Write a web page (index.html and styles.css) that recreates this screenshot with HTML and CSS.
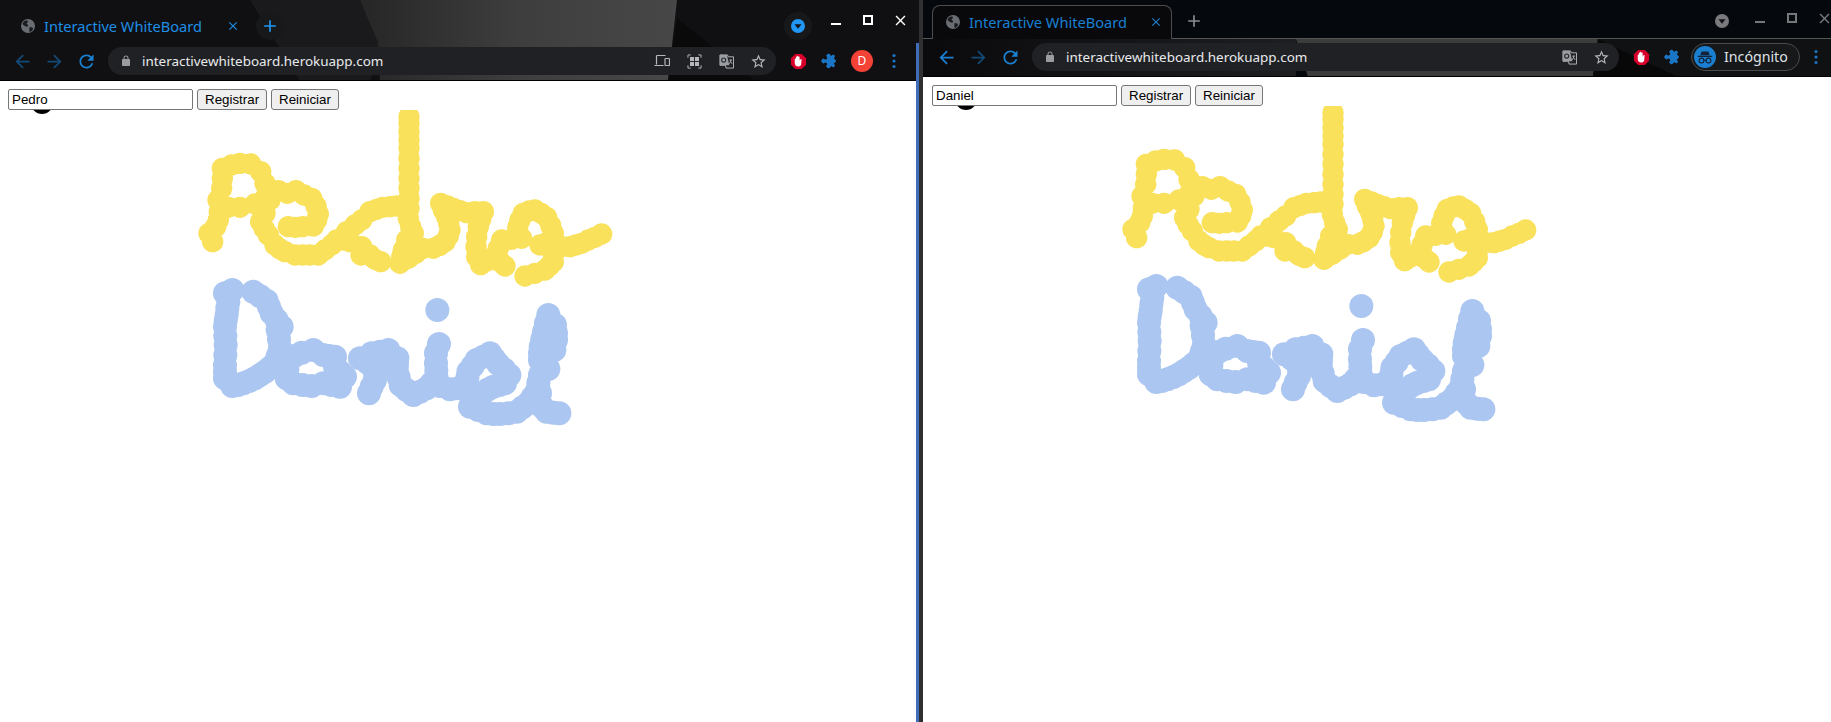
FILE: index.html
```html
<!DOCTYPE html>
<html lang="es">
<head>
<meta charset="utf-8">
<title>Interactive WhiteBoard</title>
<link rel="stylesheet" href="styles.css">
</head>
<body>
<svg class="defs" aria-hidden="true">
  <defs>
    <symbol id="i-globe" viewBox="0 0 16 16"><circle cx="8" cy="8" r="7" fill="#6a6d72"/><path d="M4 3.200l3.200-.9.8 1.800-1.600 1.300 1.800 1.800-.8 1.600-2.200-.6L2.400 6zM9.500 9l3 .6.6 1.600-2.600 2.700-1.200-.6z" fill="#1a1b1e"/></symbol>
    <symbol id="i-close" viewBox="0 0 24 24"><path d="M19 6.410L17.590 5 12 10.590 6.410 5 5 6.410 10.590 12 5 17.590 6.410 19 12 13.410 17.590 19 19 17.590 13.410 12z"/></symbol>
    <symbol id="i-plus" viewBox="0 0 24 24"><path d="M19 13h-6v6h-2v-6H5v-2h6V5h2v6h6z"/></symbol>
    <symbol id="i-back" viewBox="0 0 24 24"><path d="M20 11H7.830l5.590-5.590L12 4l-8 8 8 8 1.410-1.410L7.830 13H20v-2z"/></symbol>
    <symbol id="i-fwd" viewBox="0 0 24 24"><path d="M12 4l-1.410 1.410L16.170 11H4v2h12.170l-5.580 5.590L12 20l8-8z"/></symbol>
    <symbol id="i-reload" viewBox="0 0 24 24"><path d="M17.650 6.350C16.200 4.900 14.210 4 12 4c-4.420 0-7.990 3.580-7.990 8s3.570 8 7.990 8c3.730 0 6.840-2.550 7.730-6h-2.080c-.82 2.330-3.040 4-5.650 4-3.310 0-6-2.690-6-6s2.690-6 6-6c1.660 0 3.140.69 4.220 1.780L13 11h7V4l-2.350 2.350z"/></symbol>
    <symbol id="i-lock" viewBox="0 0 24 24"><path d="M18 8h-1V6c0-2.760-2.240-5-5-5S7 3.240 7 6v2H6c-1.100 0-2 .9-2 2v10c0 1.100.9 2 2 2h12c1.100 0 2-.9 2-2V10c0-1.100-.9-2-2-2zM9 6c0-1.660 1.340-3 3-3s3 1.340 3 3v2H9V6z"/></symbol>
    <symbol id="i-star" viewBox="0 0 24 24"><path d="M22 9.240l-7.190-.62L12 2 9.190 8.630 2 9.240l5.460 4.730L5.820 21 12 17.270 18.180 21l-1.630-7.030L22 9.240zM12 15.400l-3.760 2.270 1-4.280-3.320-2.880 4.380-.38L12 6.100l1.710 4.040 4.380.38-3.320 2.880 1 4.280L12 15.400z"/></symbol>
    <symbol id="i-puzzle" viewBox="0 0 24 24"><g transform="rotate(45 12 12) translate(1.500 1.500) scale(.875)"><path d="M20.500 11H19V7c0-1.100-.9-2-2-2h-4V3.500C13 2.120 11.880 1 10.500 1S8 2.120 8 3.500V5H4c-1.100 0-1.990.9-1.990 2v3.800H3.500c1.490 0 2.700 1.210 2.700 2.700s-1.210 2.700-2.700 2.700H2V20c0 1.100.9 2 2 2h3.800v-1.500c0-1.490 1.210-2.700 2.700-2.700 1.490 0 2.700 1.210 2.700 2.700V22H17c1.100 0 2-.9 2-2v-4h1.500c1.380 0 2.500-1.120 2.500-2.500S21.880 11 20.500 11z"/></g></symbol>
    <symbol id="i-ublock" viewBox="0 0 18 18"><path d="M5.500 1h7L17 5.500v7L12.500 17h-7L1 12.500v-7z" fill="#d8002a"/><path d="M5 10V6.500c0-.9 1.200-.9 1.200 0V4.500c0-.9 1.300-.9 1.300 0V3.500c0-.9 1.400-.9 1.400 0v1c0-.9 1.300-.9 1.300 0v3.600l.8-1.300c.6-.8 1.600-.2 1.200.6L11.800 12.500c-.6 1.100-1.500 1.900-3 1.900C6.300 14.400 5 12.500 5 10z" fill="#fff"/></symbol>
    <symbol id="i-menu" viewBox="0 0 16 16"><circle cx="8" cy="2.500" r="1.600"/><circle cx="8" cy="8" r="1.600"/><circle cx="8" cy="13.500" r="1.600"/></symbol>
    <symbol id="i-drop" viewBox="0 0 14 14"><circle cx="7" cy="7" r="7"/><path d="M3.500 5.200h7L7 9.800z" fill="#10131a"/></symbol>
    <symbol id="i-translate" viewBox="0 0 16 16"><path d="M1 1h8l1 2h5.500v12H7.500L7 12H1z" fill="none" stroke="#b8babd" stroke-width="1"/><path d="M1 1h7.500l2.500 11H1z" fill="#9a9da1"/><circle cx="5" cy="6.500" r="2.200" fill="none" stroke="#2a2b2e" stroke-width="1.200"/><path d="M11 6.500h3M12.500 6v1.500l-1.500 3M12.500 8l1.500 2.500" fill="none" stroke="#b8babd" stroke-width=".9"/></symbol>
    <symbol id="i-cast" viewBox="0 0 16 14"><path d="M2.500 1.500h9M2.500 1.500v9M.5 11.500h9" fill="none" stroke="#b5b7ba" stroke-width="1.200"/><rect x="11" y="4.500" width="4.500" height="7" rx=".7" fill="none" stroke="#b5b7ba" stroke-width="1.200"/></symbol>
    <symbol id="i-qr" viewBox="0 0 16 16"><path d="M1 4V1h3M12 1h3v3M15 12v3h-3M4 15H1v-3" fill="none" stroke="#b5b7ba" stroke-width="1"/><rect x="3.200" y="3.200" width="4.300" height="4.300" fill="#b5b7ba"/><rect x="8.500" y="3.200" width="4.300" height="4.300" fill="#b5b7ba"/><rect x="3.200" y="8.500" width="4.300" height="4.300" fill="#b5b7ba"/><rect x="8.500" y="8.500" width="4.300" height="4.300" fill="#b5b7ba"/></symbol>
    <symbol id="i-spy" viewBox="0 0 22 22"><circle cx="11" cy="11" r="11" fill="#1a7fd0"/><path d="M7.500 5.500h7l1.200 3.700H6.300zM3.800 9.800h14.400v1.200H3.800z" fill="#12233a"/><circle cx="7.500" cy="14.500" r="2.400" fill="none" stroke="#12233a" stroke-width="1.100"/><circle cx="14.500" cy="14.500" r="2.400" fill="none" stroke="#12233a" stroke-width="1.100"/><path d="M9.900 14.300h2.200" stroke="#12233a" stroke-width="1.100"/></symbol>
    <g id="ink">
      <circle class="pen" cx="42" cy="-7" r="11"/>
      <g class="ink-yellow" transform="translate(190 -10) scale(.33333)">
        <circle cx="657" cy="50"/><circle cx="657" cy="70"/><circle cx="657" cy="95"/><circle cx="657" cy="120"/><circle cx="657" cy="145"/><circle cx="657" cy="175"/><circle cx="657" cy="205"/><circle cx="657" cy="235"/><circle cx="657" cy="265"/><circle cx="657" cy="295"/><circle cx="657" cy="325"/><circle cx="655" cy="355"/><circle cx="662" cy="380"/><circle cx="670" cy="400"/><circle cx="650" cy="420"/><circle cx="640" cy="450"/><circle cx="635" cy="470"/>
        <circle cx="68" cy="425"/><circle cx="57" cy="400"/><circle cx="77" cy="380"/><circle cx="85" cy="360"/><circle cx="88" cy="335"/><circle cx="84" cy="300"/><circle cx="95" cy="265"/><circle cx="97" cy="235"/><circle cx="97" cy="205"/><circle cx="125" cy="195"/><circle cx="150" cy="190"/><circle cx="182" cy="192"/><circle cx="212" cy="215"/><circle cx="225" cy="250"/><circle cx="228" cy="290"/><circle cx="195" cy="312"/><circle cx="150" cy="322"/><circle cx="115" cy="322"/>
        <circle cx="240" cy="300"/><circle cx="265" cy="272"/><circle cx="292" cy="280"/><circle cx="318" cy="272"/><circle cx="342" cy="285"/><circle cx="365" cy="295"/><circle cx="378" cy="318"/><circle cx="385" cy="342"/><circle cx="380" cy="360"/><circle cx="370" cy="378"/><circle cx="338" cy="380"/><circle cx="316" cy="382"/><circle cx="295" cy="380"/>
        <circle cx="225" cy="340"/><circle cx="212" cy="365"/><circle cx="222" cy="385"/><circle cx="235" cy="405"/><circle cx="255" cy="435"/><circle cx="270" cy="447"/><circle cx="285" cy="455"/><circle cx="315" cy="465"/><circle cx="338" cy="465"/><circle cx="360" cy="465"/><circle cx="385" cy="465"/><circle cx="405" cy="450"/><circle cx="425" cy="435"/><circle cx="440" cy="420"/><circle cx="470" cy="395"/><circle cx="495" cy="375"/><circle cx="515" cy="360"/><circle cx="540" cy="335"/><circle cx="560" cy="328"/><circle cx="578" cy="322"/><circle cx="600" cy="320"/><circle cx="620" cy="318"/>
        <circle cx="460" cy="420"/><circle cx="480" cy="425"/><circle cx="515" cy="440"/><circle cx="513" cy="465"/><circle cx="540" cy="465"/><circle cx="555" cy="478"/><circle cx="572" cy="485"/><circle cx="630" cy="490"/><circle cx="655" cy="475"/><circle cx="678" cy="460"/><circle cx="700" cy="445"/><circle cx="730" cy="445"/><circle cx="748" cy="437"/><circle cx="765" cy="425"/><circle cx="775" cy="408"/><circle cx="780" cy="390"/><circle cx="776" cy="370"/><circle cx="770" cy="350"/><circle cx="760" cy="330"/><circle cx="752" cy="310"/><circle cx="772" cy="318"/><circle cx="790" cy="325"/><circle cx="810" cy="332"/><circle cx="830" cy="338"/><circle cx="855" cy="335"/><circle cx="880" cy="335"/><circle cx="872" cy="358"/><circle cx="865" cy="380"/><circle cx="860" cy="410"/><circle cx="858" cy="440"/><circle cx="860" cy="470"/><circle cx="872" cy="494"/><circle cx="892" cy="482"/><circle cx="912" cy="470"/><circle cx="930" cy="485"/><circle cx="945" cy="498"/><circle cx="925" cy="445"/><circle cx="935" cy="420"/><circle cx="965" cy="418"/><circle cx="995" cy="415"/><circle cx="983" cy="382"/><circle cx="990" cy="360"/><circle cx="1000" cy="340"/><circle cx="1018" cy="333"/><circle cx="1035" cy="330"/><circle cx="1053" cy="340"/><circle cx="1070" cy="352"/><circle cx="1082" cy="376"/><circle cx="1090" cy="400"/><circle cx="1090" cy="420"/><circle cx="1090" cy="440"/><circle cx="1090" cy="462"/><circle cx="1090" cy="485"/><circle cx="1078" cy="498"/><circle cx="1065" cy="510"/><circle cx="1035" cy="520"/><circle cx="1005" cy="528"/>
        <circle cx="1050" cy="435"/><circle cx="1070" cy="428"/><circle cx="1115" cy="440"/><circle cx="1140" cy="440"/><circle cx="1158" cy="435"/><circle cx="1175" cy="430"/><circle cx="1195" cy="420"/><circle cx="1215" cy="412"/><circle cx="1235" cy="402"/>
      </g>
      <g class="ink-blue" transform="translate(200 160) scale(.33333)">
        <circle cx="97" cy="60"/><circle cx="75" cy="70"/><circle cx="85" cy="95"/><circle cx="82" cy="115"/><circle cx="80" cy="135"/><circle cx="77" cy="152"/><circle cx="75" cy="170"/><circle cx="76" cy="198"/><circle cx="77" cy="225"/><circle cx="76" cy="255"/><circle cx="75" cy="285"/><circle cx="75" cy="305"/><circle cx="75" cy="325"/><circle cx="97" cy="348"/><circle cx="113" cy="345"/><circle cx="130" cy="340"/><circle cx="148" cy="333"/><circle cx="165" cy="325"/><circle cx="180" cy="315"/><circle cx="195" cy="305"/><circle cx="210" cy="293"/><circle cx="225" cy="280"/><circle cx="233" cy="258"/><circle cx="240" cy="235"/><circle cx="237" cy="208"/><circle cx="233" cy="180"/><circle cx="245" cy="170"/><circle cx="230" cy="150"/><circle cx="215" cy="130"/><circle cx="207" cy="110"/><circle cx="200" cy="92"/><circle cx="180" cy="78"/><circle cx="160" cy="65"/>
        <circle cx="260" cy="325"/><circle cx="280" cy="340"/><circle cx="308" cy="345"/><circle cx="335" cy="348"/><circle cx="370" cy="340"/><circle cx="395" cy="345"/><circle cx="420" cy="350"/><circle cx="435" cy="320"/><circle cx="420" cy="305"/><circle cx="405" cy="290"/><circle cx="405" cy="260"/><circle cx="388" cy="258"/><circle cx="370" cy="255"/><circle cx="340" cy="240"/><circle cx="305" cy="248"/><circle cx="283" cy="258"/><circle cx="262" cy="270"/><circle cx="262" cy="298"/>
        <circle cx="480" cy="265"/><circle cx="503" cy="278"/><circle cx="525" cy="290"/><circle cx="525" cy="310"/><circle cx="525" cy="330"/><circle cx="515" cy="350"/><circle cx="507" cy="370"/><circle cx="515" cy="250"/><circle cx="540" cy="245"/><circle cx="565" cy="240"/><circle cx="592" cy="265"/><circle cx="591" cy="283"/><circle cx="590" cy="300"/><circle cx="596" cy="322"/><circle cx="602" cy="345"/><circle cx="620" cy="360"/><circle cx="640" cy="375"/><circle cx="660" cy="365"/><circle cx="680" cy="355"/><circle cx="695" cy="340"/><circle cx="710" cy="325"/><circle cx="709" cy="302"/><circle cx="708" cy="280"/><circle cx="708" cy="250"/><circle cx="717" cy="222"/>
        <circle cx="712" cy="120"/>
        <circle cx="720" cy="348"/><circle cx="750" cy="358"/><circle cx="775" cy="355"/><circle cx="800" cy="345"/><circle cx="802" cy="325"/><circle cx="805" cy="305"/><circle cx="818" cy="288"/><circle cx="830" cy="270"/><circle cx="850" cy="260"/><circle cx="870" cy="250"/><circle cx="882" cy="266"/><circle cx="895" cy="282"/><circle cx="912" cy="298"/><circle cx="928" cy="315"/><circle cx="915" cy="340"/><circle cx="898" cy="345"/><circle cx="880" cy="350"/><circle cx="865" cy="358"/><circle cx="850" cy="368"/><circle cx="838" cy="382"/><circle cx="825" cy="395"/><circle cx="810" cy="410"/><circle cx="835" cy="420"/><circle cx="860" cy="430"/><circle cx="880" cy="432"/><circle cx="900" cy="432"/><circle cx="925" cy="430"/><circle cx="950" cy="425"/><circle cx="968" cy="412"/><circle cx="985" cy="400"/><circle cx="998" cy="382"/><circle cx="1010" cy="365"/><circle cx="1015" cy="340"/><circle cx="1020" cy="315"/><circle cx="1045" cy="297"/><circle cx="1033" cy="285"/><circle cx="1020" cy="270"/><circle cx="1020" cy="250"/><circle cx="1022" cy="230"/><circle cx="1027" cy="208"/><circle cx="1032" cy="185"/><circle cx="1038" cy="160"/><circle cx="1045" cy="135"/><circle cx="1065" cy="165"/><circle cx="1068" cy="190"/><circle cx="1068" cy="210"/><circle cx="1063" cy="240"/><circle cx="1020" cy="370"/><circle cx="1015" cy="385"/><circle cx="1015" cy="400"/><circle cx="1028" cy="412"/><circle cx="1040" cy="425"/><circle cx="1060" cy="428"/><circle cx="1078" cy="430"/>
      </g>
    </g>
  </defs>
</svg>

<div class="desktop">
  <section class="window window-left">
    <svg class="theme" width="916" height="81" aria-hidden="true">
      <defs><linearGradient id="wedgeL" x1="0" x2="1" y1="0" y2="0"><stop offset="0" stop-color="#262627"/><stop offset=".5" stop-color="#3e3e3e"/><stop offset="1" stop-color="#474747"/></linearGradient></defs>
      <rect width="916" height="81" fill="#101012"/>
      <polygon points="250,0 360,0 385,45 370,81 300,81" fill="#1a1a1c"/>
      <polygon points="360,0 677,0 668,81 380,81 378,42" fill="url(#wedgeL)"/>
      <polygon points="677,18 755,81 668,81" fill="#0a0a0a"/>
      <rect y="80" width="916" height="1" fill="#000"/>
    </svg>
    <div class="tabstrip">
      <div class="tab">
        <svg class="ico16"><use href="#i-globe"/></svg>
        <span class="tab-title">Interactive WhiteBoard</span>
        <svg class="tab-close"><use href="#i-close"/></svg>
      </div>
      <div class="newtab newtab-on"><svg class="ico20"><use href="#i-plus"/></svg></div>
      <div class="drop drop-on"><svg class="ico14"><use href="#i-drop"/></svg></div>
      <div class="caption">
        <span class="cap-btn"><i class="cap-min"></i></span>
        <span class="cap-btn"><i class="cap-max"></i></span>
        <span class="cap-btn"><svg class="cap-close"><use href="#i-close"/></svg></span>
      </div>
    </div>
    <div class="toolbar">
      <span class="slot nav-dim"><svg class="ico21"><use href="#i-back"/></svg></span>
      <span class="slot nav-dim"><svg class="ico21"><use href="#i-fwd"/></svg></span>
      <span class="slot nav-on"><svg class="ico21"><use href="#i-reload"/></svg></span>
      <div class="omnibox">
        <svg class="lock"><use href="#i-lock"/></svg>
        <span class="url">interactivewhiteboard.herokuapp.com</span>
        <span class="slot slot-first"><svg class="ico-cast"><use href="#i-cast"/></svg></span>
        <span class="slot"><svg class="ico14b"><use href="#i-qr"/></svg></span>
        <span class="slot"><svg class="ico14b"><use href="#i-translate"/></svg></span>
        <span class="slot star"><svg class="ico17"><use href="#i-star"/></svg></span>
      </div>
      <span class="slot slot-ext"><svg class="ico17"><use href="#i-ublock"/></svg></span>
      <span class="slot puzzle"><svg class="ico18"><use href="#i-puzzle"/></svg></span>
      <span class="slot"><span class="avatar">D</span></span>
      <span class="slot menu"><svg class="ico16"><use href="#i-menu"/></svg></span>
    </div>
    <main class="page">
      <form class="board-form">
        <input class="name-input" type="text" value="Pedro">
        <button class="btn" type="button">Registrar</button>
        <button class="btn" type="button">Reiniciar</button>
      </form>
      <svg class="canvas"><use href="#ink"/></svg>
    </main>
  </section>

  <div class="divider"></div>

  <section class="window window-right">
    <svg class="theme" width="908" height="77" aria-hidden="true">
      <defs><linearGradient id="barR" x1="0" x2="1" y1="0" y2="0"><stop offset="0" stop-color="#0a0a0c"/><stop offset="1" stop-color="#1e1e20"/></linearGradient></defs>
      <rect width="908" height="77" fill="#05090d"/>
      <rect y="39" width="373" height="38" fill="url(#barR)"/>
      <polygon points="373,39 675,39 670,77 385,77" fill="#3c3c3d"/>
      <polygon points="675,39 908,39 908,77 670,77" fill="#101112"/>
      <polygon points="675,39 755,77 670,77" fill="#080808"/>
      <rect y="38" width="908" height="1" fill="#555"/>
      <rect y="76" width="908" height="1" fill="#000"/>
    </svg>
    <div class="tabstrip">
      <div class="tab tab-framed">
        <svg class="ico16"><use href="#i-globe"/></svg>
        <span class="tab-title">Interactive WhiteBoard</span>
        <svg class="tab-close"><use href="#i-close"/></svg>
      </div>
      <div class="newtab newtab-off"><svg class="ico20"><use href="#i-plus"/></svg></div>
      <div class="drop drop-off"><svg class="ico14"><use href="#i-drop"/></svg></div>
      <div class="caption caption-off">
        <span class="cap-btn"><i class="cap-min"></i></span>
        <span class="cap-btn"><i class="cap-max"></i></span>
        <span class="cap-btn"><svg class="cap-close"><use href="#i-close"/></svg></span>
      </div>
    </div>
    <div class="toolbar">
      <span class="slot nav-on"><svg class="ico21"><use href="#i-back"/></svg></span>
      <span class="slot nav-dim"><svg class="ico21"><use href="#i-fwd"/></svg></span>
      <span class="slot nav-on"><svg class="ico21"><use href="#i-reload"/></svg></span>
      <div class="omnibox">
        <svg class="lock"><use href="#i-lock"/></svg>
        <span class="url">interactivewhiteboard.herokuapp.com</span>
        <span class="slot slot-first"><svg class="ico14b"><use href="#i-translate"/></svg></span>
        <span class="slot star"><svg class="ico17"><use href="#i-star"/></svg></span>
      </div>
      <span class="slot slot-ext"><svg class="ico17"><use href="#i-ublock"/></svg></span>
      <span class="slot puzzle"><svg class="ico18"><use href="#i-puzzle"/></svg></span>
      <div class="incognito">
        <svg class="spy"><use href="#i-spy"/></svg>
        <span class="incognito-label">Incógnito</span>
      </div>
      <span class="slot menu"><svg class="ico16"><use href="#i-menu"/></svg></span>
    </div>
    <main class="page">
      <form class="board-form">
        <input class="name-input" type="text" value="Daniel">
        <button class="btn" type="button">Registrar</button>
        <button class="btn" type="button">Reiniciar</button>
      </form>
      <svg class="canvas"><use href="#ink"/></svg>
    </main>
  </section>
</div>
</body>
</html>
```

FILE: styles.css
```css
* { box-sizing: border-box; }
html, body { margin: 0; height: 100%; overflow: hidden; background: #fff; }
.defs { position: absolute; width: 0; height: 0; }

.desktop { display: flex; width: 1831px; height: 722px; overflow: hidden; }
.window { position: relative; display: flex; flex-direction: column; height: 722px; overflow: hidden; flex: none; font-family: "Noto Sans", sans-serif; }
.window-left { width: 916px; }
.window-right { width: 908px; }
.divider {
  width: 7px; flex: none;
  background:
    linear-gradient(#111113, #111113) 0 0 / 3px 43px no-repeat,
    linear-gradient(90deg, #3f6dbc 3px, #303032 3px);
}
.theme { position: absolute; left: 0; top: 0; }

/* tab strip */
.tabstrip { position: relative; display: flex; align-items: flex-start; flex: none; }
.window-left .tabstrip { height: 42px; padding: 10px 0 0 12px; }
.window-right .tabstrip { height: 38px; padding: 5px 0 0 9px; }

.tab { display: flex; align-items: center; width: 236px; height: 32px; padding: 0 8px; color: #1e8ee6; }
.tab-framed { width: 240px; height: 34px; padding: 0 8px 1px 12px; color: #1a80d2; background: #09090c; border: 1px solid #4c4c4f; border-bottom: 0; border-radius: 8px 8px 0 0; }
.tab-title { margin-left: 8px; font-size: 14.6px; line-height: 16px; white-space: nowrap; }
.tab-close { width: 14px; height: 14px; margin-left: auto; fill: currentColor; flex: none; }

.newtab { display: flex; align-items: center; justify-content: center; width: 28px; height: 28px; margin: 2px 0 0 8px; border-radius: 50%; flex: none; }
.newtab-on { background: #17181a; fill: #2196f3; }
.newtab-off { fill: #8a8c8f; }

.drop { display: flex; align-items: center; justify-content: center; width: 28px; height: 28px; margin-top: 2px; margin-left: auto; border-radius: 50%; flex: none; }
.drop-on { background: #17181a; fill: #2196f3; margin-right: 8px; }
.drop-off { fill: #7a7a7c; margin-right: 8px; }

.caption { display: flex; flex: none; }
.caption-off { margin: 3px -9px 0 0; opacity: .45; }
.cap-btn { display: flex; align-items: center; justify-content: center; width: 32px; height: 20px; color: #fff; }
.cap-min { display: block; width: 10px; height: 2px; margin-top: 7px; background: currentColor; }
.cap-max { display: block; width: 10px; height: 10px; border: 2px solid currentColor; }
.cap-close { width: 17px; height: 17px; fill: currentColor; }

/* toolbar */
.toolbar { position: relative; display: flex; align-items: center; height: 39px; padding-bottom: 6px; padding-top: 5px; flex: none; }
.window-left .toolbar { padding-left: 6px; }
.window-right .toolbar { padding-left: 7px; }
.slot { display: flex; align-items: center; justify-content: center; width: 32px; height: 28px; flex: none; }
.nav-on { fill: #1a80d2; }
.nav-dim { fill: #124a75; }
.star { fill: #b5b7ba; }
.puzzle { fill: #1a76c4; }
.menu { fill: #1a76c4; }
.slot-ext { margin-left: 6px; }

.ico14 { width: 14px; height: 14px; }
.ico14b { width: 15px; height: 15px; }
.ico16 { width: 16px; height: 16px; }
.ico17 { width: 17px; height: 17px; }
.ico18 { width: 18px; height: 18px; }
.ico20 { width: 20px; height: 20px; }
.ico21 { width: 21px; height: 21px; }
.ico-cast { width: 16px; height: 14px; }

.omnibox { display: flex; align-items: center; height: 28px; margin-left: 6px; padding: 0 2px 0 12px; border-radius: 14px; background: #202124; flex: none; }
.window-left .omnibox { width: 668px; }
.window-right .omnibox { width: 587px; }
.lock { width: 12px; height: 12px; fill: #9a9ca0; flex: none; }
.url { margin-left: 10px; color: #e8eaed; font-size: 13.45px; line-height: 16px; white-space: nowrap; }
.slot-first { margin-left: auto; }

.avatar { display: flex; align-items: center; justify-content: center; width: 22px; height: 22px; border-radius: 50%; background: #f44336; color: #fff; font-size: 12px; line-height: 1; }

.incognito { display: flex; align-items: center; width: 109px; height: 28px; margin-left: 2px; padding-left: 2px; border: 1px solid #4a4b4e; border-radius: 14px; background: #17181a; flex: none; }
.spy { width: 22px; height: 22px; flex: none; }
.incognito-label { margin-left: 8px; color: #dfe1e5; font-size: 14.2px; line-height: 16px; }

/* page */
.page { flex: 1; display: flex; flex-direction: column; min-height: 0; background: #fff; }
.board-form { display: flex; gap: 4px; height: 29px; padding: 8px 0 0 8px; flex: none; }
.window-right .board-form { padding-left: 9px; }
.name-input { width: 185px; height: 21px; padding: 1px 3px; border: 1px solid #767676; border-radius: 2px; background: #fff; color: #000; font: 13.33px "Liberation Sans", Arial, sans-serif; }
.btn { height: 21px; padding: 1px 7px; border: 1px solid #767676; border-radius: 3px; background: #efefef; color: #000; font: 13.33px "Liberation Sans", Arial, sans-serif; }

.canvas { display: block; width: 100%; flex: 1; min-height: 0; }
.window-right .canvas { margin-left: 1px; }
.pen { fill: #000; }
.ink-yellow { fill: #f9e15b; }
.ink-yellow circle { r: 32px; }
.ink-blue { fill: #abc6f1; }
.ink-blue circle { r: 36px; }
```
